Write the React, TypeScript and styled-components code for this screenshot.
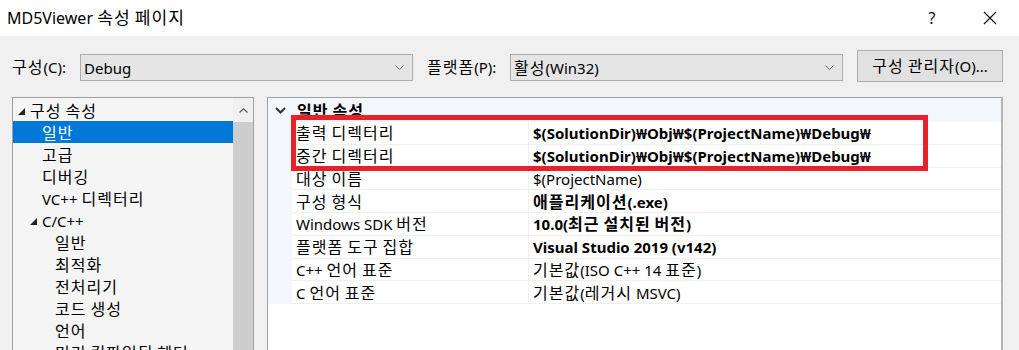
import React from "react";
import styled, { createGlobalStyle } from "styled-components";

type TreeItem = { label: string; level: number; expander?: boolean; selected?: boolean };
type PropRow = { name: string; value: string; bold?: boolean };

const treeItems: TreeItem[] = [
  { label: "구성 속성", level: 0, expander: true },
  { label: "일반", level: 1, selected: true },
  { label: "고급", level: 1 },
  { label: "디버깅", level: 1 },
  { label: "VC++ 디렉터리", level: 1 },
  { label: "C/C++", level: 1, expander: true },
  { label: "일반", level: 2 },
  { label: "최적화", level: 2 },
  { label: "전처리기", level: 2 },
  { label: "코드 생성", level: 2 },
  { label: "언어", level: 2 },
  { label: "미리 컴파일된 헤더", level: 2 },
];

const propRows: PropRow[] = [
  { name: "출력 디렉터리", value: "$(SolutionDir)₩Obj₩$(ProjectName)₩Debug₩", bold: true },
  { name: "중간 디렉터리", value: "$(SolutionDir)₩Obj₩$(ProjectName)₩Debug₩", bold: true },
  { name: "대상 이름", value: "$(ProjectName)" },
  { name: "구성 형식", value: "애플리케이션(.exe)", bold: true },
  { name: "Windows SDK 버전", value: "10.0(최근 설치된 버전)", bold: true },
  { name: "플랫폼 도구 집합", value: "Visual Studio 2019 (v142)", bold: true },
  { name: "C++ 언어 표준", value: "기본값(ISO C++ 14 표준)" },
  { name: "C 언어 표준", value: "기본값(레거시 MSVC)" },
];

const GlobalStyle = createGlobalStyle`
  html, body { margin: 0; padding: 0; background: #f0f0f0; }
  body {
    font-family: "Noto Sans", "Noto Sans CJK KR", sans-serif;
    font-size: 15px;
    color: #000;
  }
`;

// Hangul runs are drawn a touch larger and wider, like Malgun Gothic
const Hangul = styled.span`
  font-size: 1.07em;
  letter-spacing: 1px;
  line-height: 1;
`;

const Txt = ({ children }: { children: string }) => {
  const parts = children.split(/([\uAC00-\uD7A3]+)/);
  return (
    <span>
      {parts.map((p, i) =>
        /[\uAC00-\uD7A3]/.test(p) ? <Hangul key={i}>{p}</Hangul> : <React.Fragment key={i}>{p}</React.Fragment>
      )}
    </span>
  );
};

const Window = styled.div`
  width: 1019px;
  height: 350px;
  overflow: hidden;
  display: flex;
  flex-direction: column;
  background: #f0f0f0;
`;

const TitleBar = styled.div`
  height: 36px;
  flex: none;
  background: #fff;
  display: flex;
  align-items: center;
  padding-left: 7px;
  font-size: 16px;
`;

const Title = styled.div`
  flex: 1;
`;

const CaptionButton = styled.div`
  width: 58px;
  height: 36px;
  display: flex;
  align-items: center;
  justify-content: center;
  font-size: 16px;
  color: #111;
`;

const Body = styled.div`
  flex: 1;
  display: flex;
  flex-direction: column;
  padding: 14px 16px 0 12px;
  min-height: 0;
`;

const ConfigRow = styled.div`
  height: 32px;
  display: flex;
  align-items: center;
`;

const FieldLabel = styled.div<{ $w: number }>`
  width: ${(p) => p.$w}px;
  flex: none;
  padding-top: 2px;
  white-space: nowrap;
`;

const Combo = styled.div`
  width: 333px;
  height: 27px;
  box-sizing: border-box;
  border: 1px solid #adadad;
  background: #e5e5e5;
  display: flex;
  align-items: center;
  padding: 0 8px 0 3px;
  margin-top: 3px;
`;

const ComboText = styled.div`
  flex: 1;
`;

const Spacer = styled.div<{ $w: number }>`
  width: ${(p) => p.$w}px;
  flex: none;
`;

const Button = styled.div`
  width: 146px;
  height: 32px;
  box-sizing: border-box;
  border: 1px solid #adadad;
  background: #e1e1e1;
  display: flex;
  align-items: center;
  justify-content: center;
  white-space: nowrap;
`;

const Panels = styled.div`
  flex: 1;
  display: flex;
  margin-top: 15px;
  gap: 13px;
  min-height: 0;
`;

const TreePanel = styled.div`
  width: 242px;
  flex: none;
  box-sizing: border-box;
  border: 1px solid #a0a0a0;
  border-bottom: none;
  background: #f5f5f5;
  display: flex;
`;

const TreeList = styled.div`
  flex: 1;
  padding-top: 1px;
  overflow: hidden;
`;

const TreeRow = styled.div<{ $level: number; $selected?: boolean }>`
  height: 22px;
  box-sizing: border-box;
  padding-top: 2px;
  display: flex;
  align-items: center;
  padding-left: ${(p) => (p.$level === 0 ? 5 : p.$level === 1 ? 29 : 42)}px;
  background: ${(p) => (p.$selected ? "#0078d7" : "transparent")};
  color: ${(p) => (p.$selected ? "#fff" : "#000")};
  white-space: nowrap;
`;

const Expander = styled.span<{ $root?: boolean }>`
  width: 12px;
  margin-left: ${(p) => (p.$root ? 0 : -12)}px;
  display: inline-flex;
  align-items: center;
`;

const ScrollBar = styled.div`
  width: 20px;
  flex: none;
  display: flex;
  flex-direction: column;
  background: #f0f0f0;
`;

const ScrollArrow = styled.div`
  height: 24px;
  display: flex;
  align-items: center;
  justify-content: center;
`;

const ScrollThumb = styled.div`
  flex: 1;
  background: #cdcdcd;
`;

const GridPanel = styled.div`
  flex: 1;
  position: relative;
  box-sizing: border-box;
  border: 1px solid #a0a0a0;
  border-right: 2px solid #b4b4b4;
  border-bottom: none;
  background: #fff;
`;

const GroupHeader = styled.div`
  height: 24px;
  display: flex;
  align-items: center;
  background: #f3f6fa;
  font-weight: 700;
`;

const Gutter = styled.div`
  width: 24px;
  flex: none;
  display: flex;
  align-items: center;
  justify-content: center;
  align-self: stretch;
`;

const GroupTitle = styled.div`
  padding: 1px 0 0 5px;
`;

const PropTable = styled.div`
  display: flex;
`;

const GutterColumn = styled.div`
  width: 24px;
  flex: none;
  background: #f3f6fa;
`;

const Rows = styled.div`
  flex: 1;
`;

const PropRowLine = styled.div`
  height: 22.75px;
  box-sizing: border-box;
  display: grid;
  grid-template-columns: 237px 1fr;
  border-bottom: 1px solid #f0f0f0;
`;

const Cell = styled.div<{ $bold?: boolean; $divider?: boolean }>`
  display: flex;
  align-items: center;
  padding: 1px 0 0 4px;
  font-weight: ${(p) => (p.$bold ? 700 : 400)};
  border-right: ${(p) => (p.$divider ? "1px solid #f0f0f0" : "none")};
  white-space: nowrap;
  overflow: hidden;
`;

const Highlight = styled.div`
  position: absolute;
  left: 23px;
  top: 17px;
  width: 637px;
  height: 56px;
  box-sizing: border-box;
  border: 5px solid #e8202a;
  pointer-events: none;
`;

const TriangleIcon = () => (
  <svg width="7" height="7" viewBox="0 0 7 7">
    <polygon points="7,0 7,7 0,7" fill="#222" />
  </svg>
);

const ComboChevron = () => (
  <svg width="9" height="5" viewBox="0 0 9 5">
    <polyline points="0.5,0.5 4.5,4.5 8.5,0.5" fill="none" stroke="#666" strokeWidth="1" />
  </svg>
);

export default function App() {
  return (
    <Window>
      <GlobalStyle />
      <TitleBar>
        <Title>
          <Txt>MD5Viewer 속성 페이지</Txt>
        </Title>
        <CaptionButton>?</CaptionButton>
        <CaptionButton>
          <svg width="14" height="14" viewBox="0 0 14 14">
            <path d="M1 1 L13 13 M13 1 L1 13" stroke="#111" strokeWidth="1.2" />
          </svg>
        </CaptionButton>
      </TitleBar>
      <Body>
        <ConfigRow>
          <FieldLabel $w={68}>
            <Txt>구성(C):</Txt>
          </FieldLabel>
          <Combo>
            <ComboText>Debug</ComboText>
            <ComboChevron />
          </Combo>
          <Spacer $w={14} />
          <FieldLabel $w={83}>
            <Txt>플랫폼(P):</Txt>
          </FieldLabel>
          <Combo>
            <ComboText>
              <Txt>활성(Win32)</Txt>
            </ComboText>
            <ComboChevron />
          </Combo>
          <Spacer $w={14} />
          <Button>
            <Txt>구성 관리자(O)...</Txt>
          </Button>
        </ConfigRow>
        <Panels>
          <TreePanel>
            <TreeList>
              {treeItems.map((t, i) => (
                <TreeRow key={i} $level={t.level} $selected={t.selected}>
                  {t.expander && (
                    <Expander $root={t.level === 0}>
                      <TriangleIcon />
                    </Expander>
                  )}
                  <Txt>{t.label}</Txt>
                </TreeRow>
              ))}
            </TreeList>
            <ScrollBar>
              <ScrollArrow>
                <svg width="9" height="5" viewBox="0 0 9 5">
                  <polyline points="0.5,4.5 4.5,0.8 8.5,4.5" fill="none" stroke="#606060" strokeWidth="1.3" />
                </svg>
              </ScrollArrow>
              <ScrollThumb />
            </ScrollBar>
          </TreePanel>
          <GridPanel>
            <GroupHeader>
              <Gutter>
                <svg width="11" height="7" viewBox="0 0 11 7">
                  <polyline points="1,1 5.5,5.5 10,1" fill="none" stroke="#333" strokeWidth="2" />
                </svg>
              </Gutter>
              <GroupTitle>
                <Txt>일반 속성</Txt>
              </GroupTitle>
            </GroupHeader>
            <PropTable>
              <GutterColumn />
              <Rows>
                {propRows.map((r, i) => (
                  <PropRowLine key={i}>
                    <Cell $divider>
                      <Txt>{r.name}</Txt>
                    </Cell>
                    <Cell $bold={r.bold}>
                      <Txt>{r.value}</Txt>
                    </Cell>
                  </PropRowLine>
                ))}
              </Rows>
            </PropTable>
            <Highlight />
          </GridPanel>
        </Panels>
      </Body>
    </Window>
  );
}
